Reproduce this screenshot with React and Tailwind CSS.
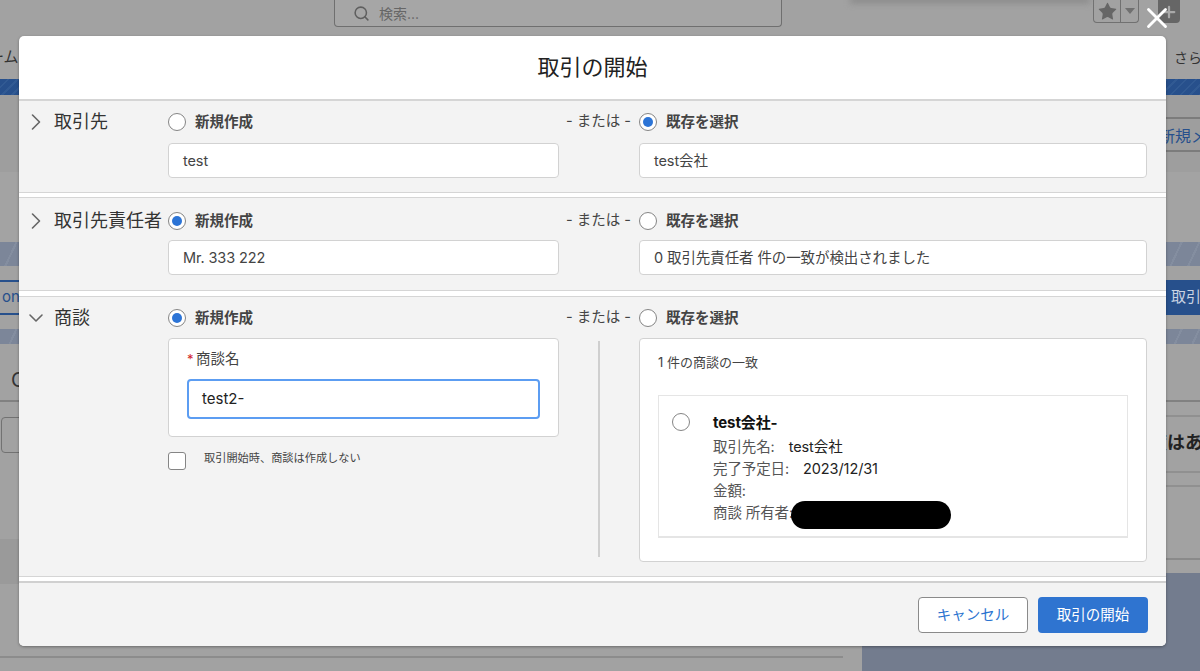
import { ChevronRight, ChevronDown, Search, Star, Plus, X } from 'lucide-react'

const stripe = 'bg-[#27508c] bg-[repeating-linear-gradient(135deg,#27508c_0px,#27508c_5px,#315a93_5px,#315a93_7px)]'
const band = 'bg-[#7c8699] bg-[repeating-linear-gradient(115deg,#7c8699_0px,#7c8699_14px,#848ea0_14px,#848ea0_16px)]'

function Radio({ checked }) {
  return (
    <span className="w-[18px] h-[18px] rounded-full border border-[#858585] bg-white flex items-center justify-center shrink-0">
      {checked && <span className="w-[10px] h-[10px] rounded-full bg-[#2c74d6]" />}
    </span>
  )
}

function RadioLabel({ checked, children }) {
  return (
    <div className="flex items-center gap-[9px] h-[18px]">
      <Radio checked={checked} />
      <span className="text-[14.5px] font-bold text-[#444] -mt-[1px]">{children}</span>
    </div>
  )
}

function Field({ children }) {
  return (
    <div className="h-[35px] rounded-[4px] border border-[#d2d2d2] bg-white flex items-center px-[14px] text-[14.5px] text-[#444] -tracking-[0.1px]">
      {children}
    </div>
  )
}

function SectionHead({ open, label, leftChecked, rightChecked }) {
  return (
    <>
      <div className="flex items-center h-[18px] pl-[3px] gap-[4px] whitespace-nowrap">
        {open
          ? <ChevronDown size={24} strokeWidth={1.6} className="text-[#666] shrink-0 mx-[2px]" />
          : <ChevronRight size={28} strokeWidth={1.4} className="text-[#666] shrink-0" />}
        <span className="text-[18px] text-[#333] -mt-[2px]">{label}</span>
      </div>
      <RadioLabel checked={leftChecked}>新規作成</RadioLabel>
      <div className="h-[18px] flex items-center pl-[7px] text-[14.5px] text-[#444] -mt-[1px] whitespace-nowrap">- または -</div>
      <RadioLabel checked={rightChecked}>既存を選択</RadioLabel>
    </>
  )
}

const sectionGrid = 'grid grid-cols-[149px_391px_80px_508px] bg-[#f3f3f3]'

function Background() {
  return (
    <div className="w-[1200px] h-[671px] flex flex-col bg-[#a2a2a2] text-[#333] overflow-hidden">
      <div className="h-[36px] flex items-start shrink-0">
        <div className="ml-[334px] w-[448px] h-[27px] rounded-b-[4px] border border-t-0 border-[#6f6f6f] bg-[#a6a6a6] flex items-center pl-[18px] gap-[9px] text-[14px] text-[#666]">
          <Search size={17} strokeWidth={2.2} className="text-[#5f5f5f]" />
          <span>検索...</span>
        </div>
        <div className="ml-[311px] w-[46px] h-[23px] rounded-b-[4px] border border-t-0 border-[#717171] flex">
          <div className="w-[27px] flex items-center justify-center border-r border-[#717171]">
            <Star size={21} fill="#666" strokeWidth={0} />
          </div>
          <div className="flex-1 flex items-center justify-center">
            <div className="w-0 h-0 border-x-[5px] border-x-transparent border-t-[6px] border-t-[#707070]" />
          </div>
        </div>
        <div className="ml-[19px] w-[22px] h-[23px] rounded-b-[4px] bg-[#666] flex items-center justify-center">
          <Plus size={18} strokeWidth={3} className="text-[#a9a9a9]" />
        </div>
      </div>
      <div className="h-[43px] flex justify-between items-center shrink-0 text-[15px] whitespace-nowrap">
        <span className="-ml-[11px]">ーム</span>
        <span className="w-[26px] text-[14px]">さら</span>
      </div>
      <div className={`h-[16px] shrink-0 ${stripe}`} />
      <div className="h-[77px] shrink-0 bg-[#9e9e9e] pt-[22px]">
        <div className="ml-auto w-[50px] h-[35px] border-y-2 border-[#7c7c7c] flex items-center pl-[9px] pt-[2px] whitespace-nowrap text-[16px] text-[#27508c] overflow-hidden">
          新規メ
        </div>
      </div>
      <div className="h-[70px] shrink-0 bg-[#a3a3a3]" />
      <div className={`h-[24px] shrink-0 ${band}`} />
      <div className="h-[14px] shrink-0" />
      <div className="h-[35px] shrink-0 flex justify-between">
        <div className="w-[60px] border-y-2 border-[#27508c] flex items-center text-[15px] text-[#27508c] pl-[2px]">
          <span>on</span>
        </div>
        <div className="w-[60px] bg-[#27508c] flex items-center text-[15px] text-[#c9d3e2] whitespace-nowrap overflow-hidden">
          <span className="ml-[31px]">取引</span>
        </div>
      </div>
      <div className="h-[14px] shrink-0" />
      <div className={`h-[15px] shrink-0 ${band}`} />
      <div className="h-[58px] shrink-0 border-b-2 border-[#818181] flex items-end pb-[8px]">
        <span className="ml-[11px] text-[20px] leading-[24px]">C</span>
      </div>
      <div className="h-[69px] shrink-0 flex justify-between">
        <div className="mt-[15px] ml-[1px] w-[60px] h-[36px] rounded-[4px] border border-[#727272]" />
        <div className="mt-[13px] w-[60px] h-[56px] border-t-2 border-[#909090] flex items-center whitespace-nowrap overflow-hidden">
          <span className="text-[18px] font-bold text-[#222] ml-[9px] -mt-[3px]">度はあ</span>
        </div>
      </div>
      <div className="flex-1 flex">
        <div className="w-[862px] flex flex-col">
          <div className="h-[68px]" />
          <div className="h-[45px] bg-[#9a9a9a]" />
          <div className="h-[72px]" />
          <div className="w-[843px] border-t-2 border-[#8c8c8c]" />
        </div>
        <div className="flex-1 flex flex-col">
          <div className="h-[14px] border-t-2 border-[#909090]" />
          <div className="h-[73px] border-t-2 border-[#909090]" />
          <div className="h-[15px] border-t-2 border-[#8a8a8a]" />
          <div className="flex-1 bg-[#737c8e]" />
        </div>
      </div>
    </div>
  )
}

export default function App() {
  return (
    <div className="relative w-[1200px] h-[671px] overflow-hidden font-['Inter','Noto_Sans_CJK_JP',sans-serif]">
      <Background />

      {/* shadow of a menu that hangs above the top edge */}
      <div className="absolute left-[850px] -top-[3px] w-[240px] h-[6px] bg-[#888] blur-[3px]" />

      <button className="absolute left-[1140px] top-[1px] text-white">
        <X size={34} strokeWidth={2} />
      </button>

      <div className="absolute left-[19px] top-[36px] w-[1147px] h-[610px] rounded-[5px] overflow-hidden bg-white shadow-[0_1px_3px_rgba(0,0,0,0.35)] flex flex-col">
        <div className="h-[65px] shrink-0 border-b-2 border-[#d5d5d5] flex items-center justify-center text-[22px] text-[#222]">
          取引の開始
        </div>

        <div className={`${sectionGrid} h-[92px] shrink-0 pt-[12px] border-b border-[#d5d5d5] content-start`}>
          <SectionHead label="取引先" rightChecked />
          <div className="col-start-2 mt-[12px]"><Field>test</Field></div>
          <div className="col-start-4 mt-[12px] w-[508px]"><Field>test会社</Field></div>
        </div>

        <div className="h-[4px] shrink-0" />

        <div className={`${sectionGrid} h-[94px] shrink-0 pt-[14px] border-y border-[#d5d5d5] content-start`}>
          <SectionHead label="取引先責任者" leftChecked />
          <div className="col-start-2 mt-[10px]"><Field>Mr. 333 222</Field></div>
          <div className="col-start-4 mt-[10px]"><Field>0 取引先責任者 件の一致が検出されました</Field></div>
        </div>

        <div className="h-[5px] shrink-0" />

        <div className={`${sectionGrid} h-[281px] shrink-0 pt-[12px] border-y border-[#d5d5d5] content-start`}>
          <SectionHead open label="商談" leftChecked />

          <div className="col-start-2 mt-[11px]">
            <div className="h-[99px] rounded-[4px] border border-[#d2d2d2] bg-white pt-[11px] px-[18px]">
              <div className="text-[14.5px] leading-[18px] text-[#444] flex items-center">
                <span className="text-[#d2232a] text-[13px] w-[9px]">*</span>
                <span>商談名</span>
              </div>
              <div className="mt-[11px] h-[40px] rounded-[4px] border-2 border-[#5c9df2] flex items-center px-[13px] text-[15px] text-[#222]">
                test2-
              </div>
            </div>
            <div className="mt-[15px] flex items-start gap-[18px]">
              <span className="w-[18px] h-[18px] rounded-[3px] border border-[#858585] bg-white shrink-0" />
              <span className="text-[11.2px] leading-[14px] text-[#444] -mt-[1px]">取引開始時、商談は作成しない</span>
            </div>
          </div>

          <div className="col-start-3 mt-[14px] h-[216px] flex justify-center">
            <div className="w-[2px] bg-[#cfcfcf]" />
          </div>

          <div className="col-start-4 mt-[11px]">
            <div className="h-[224px] rounded-[4px] border border-[#d2d2d2] bg-white px-[18px] pt-[14px]">
              <div className="text-[13px] leading-[18px] text-[#444]">1 件の商談の一致</div>
              <div className="mt-[24px] h-[143px] border border-b-2 border-[#e5e5e5] flex pl-[13px] pt-[17px] gap-[23px]">
                <Radio />
                <div className="text-[14.5px] leading-[22px] text-[#555] whitespace-nowrap -tracking-[0.1px]">
                  <div className="text-[15px] font-bold text-[#111] -mt-[1px]">test会社-</div>
                  <div className="mt-[2px]">取引先名:<span className="ml-[14px] text-[#222]">test会社</span></div>
                  <div>完了予定日:<span className="ml-[14px] text-[#222]">2023/12/31</span></div>
                  <div>金額:</div>
                  <div className="flex items-center h-[22px]">
                    <span>商談 所有者:</span>
                    <span className="-ml-[2px] mt-[4px] w-[160px] h-[28px] rounded-full bg-black shrink-0" />
                  </div>
                </div>
              </div>
            </div>
          </div>
        </div>

        <div className="h-[4px] shrink-0" />

        <div className="flex-1 bg-[#f3f3f3] border-t-2 border-[#d0d0d0] flex items-start justify-end gap-[10px] pt-[14px] pr-[18px]">
          <button className="w-[110px] h-[36px] rounded-[4px] border border-[#8a8a8a] bg-white text-[14.5px] text-[#2c74d0]">
            キャンセル
          </button>
          <button className="w-[110px] h-[36px] rounded-[4px] bg-[#2f74d0] text-[14.5px] text-white">
            取引の開始
          </button>
        </div>
      </div>
    </div>
  )
}
